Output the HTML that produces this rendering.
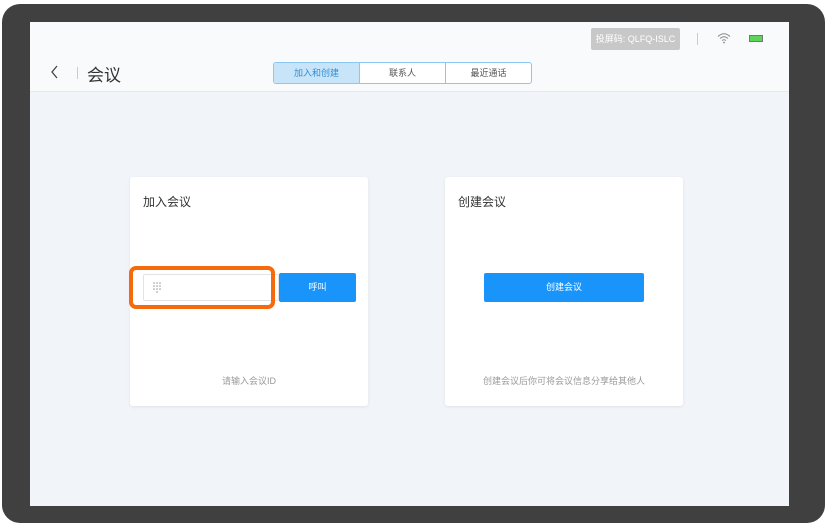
<!DOCTYPE html>
<html><head><meta charset="utf-8"><style>
*{margin:0;padding:0;box-sizing:border-box}
body{width:827px;height:529px;background:#fff;position:relative;overflow:hidden;font-family:"Liberation Sans","Noto Sans CJK SC",sans-serif}
.bezel{position:absolute;left:2px;top:4px;width:823px;height:519px;background:#404040;border-radius:18px}
.screen{position:absolute;left:30px;top:22px;width:759px;height:484px;background:#f1f5f9;overflow:hidden}
.hdr{position:absolute;left:0;top:0;width:100%;height:70px;background:#f8fafb;border-bottom:1px solid #e4e9ee}
.abs{position:absolute}
.code{left:561px;top:6px;width:89px;height:22px;background:#c8c8c8;border-radius:2px;color:#fff;font-size:9px;line-height:22px;text-align:center}
.tabs{left:243px;top:40px;width:259px;height:22px;border:1px solid #8cc7f2;border-radius:3px;display:flex;font-size:9px;color:#555;overflow:hidden;background:#fff}
.tabs div{flex:1;text-align:center;line-height:20px;border-left:1px solid #8cc7f2}
.tabs div:first-child{border-left:none;background:#c8e4f8;color:#2f8fd6}
.card{background:#fff;border-radius:3px;box-shadow:0 1px 3px rgba(0,0,0,.08);width:238px;height:229px;top:155px}
.ct{left:13px;top:16px;font-size:12px;color:#333}
.btn{background:#1894fb;color:#fff;font-size:9px;text-align:center;border-radius:2px}
.hint{width:100%;text-align:center;top:197px;font-size:9px;color:#999}
</style></head><body>
<div class="bezel"></div>
<div class="screen">
 <div class="hdr">
  <div class="abs code">投屏码: QLFQ-ISLC</div>
  <div class="abs" style="left:667px;top:11px;width:1px;height:12px;background:#ccc"></div>
  <svg class="abs" style="left:687px;top:10px" width="14" height="12" viewBox="0 0 14 12"><path d="M1 4.5Q7 -1 13 4.5M3 6.5Q7 3 11 6.5M5 8.5Q7 7 9 8.5" fill="none" stroke="#888" stroke-width="1"/><circle cx="7" cy="10.5" r="0.9" fill="#888"/></svg>
  <div class="abs" style="left:719px;top:13px;width:14px;height:7px;border:1px solid #777;background:#5cd45c"></div>
  <svg class="abs" style="left:20px;top:43px" width="10" height="14" viewBox="0 0 10 14"><path d="M7 1L2 7L7 13" fill="none" stroke="#444" stroke-width="1.3"/></svg>
  <div class="abs" style="left:47px;top:45px;width:1px;height:12px;background:#ccc"></div>
  <div class="abs" style="left:57px;top:39px;font-size:17px;color:#333">会议</div>
  <div class="abs tabs"><div>加入和创建</div><div>联系人</div><div>最近通话</div></div>
 </div>
 <div class="abs card" style="left:100px">
  <div class="abs ct">加入会议</div>
  <div class="abs" style="left:13px;top:97px;width:136px;height:27px;border:1px solid #e3e3e3;border-radius:2px;background:#fff"></div>
  <svg class="abs" style="left:22px;top:104px" width="10" height="13"><g fill="#999"><circle cx="2" cy="2" r=".8"/><circle cx="5" cy="2" r=".8"/><circle cx="8" cy="2" r=".8"/><circle cx="2" cy="5" r=".8"/><circle cx="5" cy="5" r=".8"/><circle cx="8" cy="5" r=".8"/><circle cx="2" cy="8" r=".8"/><circle cx="5" cy="8" r=".8"/><circle cx="8" cy="8" r=".8"/><circle cx="5" cy="11" r=".8"/></g></svg>
  <div class="abs btn" style="left:149px;top:96px;width:77px;height:29px;line-height:29px">呼叫</div>
  <div class="abs hint">请输入会议ID</div>
 </div>
 <div class="abs" style="left:99px;top:244px;width:146px;height:43px;border:4px solid #f56a0c;border-radius:7px"></div>
 <div class="abs card" style="left:415px">
  <div class="abs ct">创建会议</div>
  <div class="abs btn" style="left:39px;top:96px;width:160px;height:29px;line-height:29px">创建会议</div>
  <div class="abs hint">创建会议后你可将会议信息分享给其他人</div>
 </div>
</div>
</body></html>
